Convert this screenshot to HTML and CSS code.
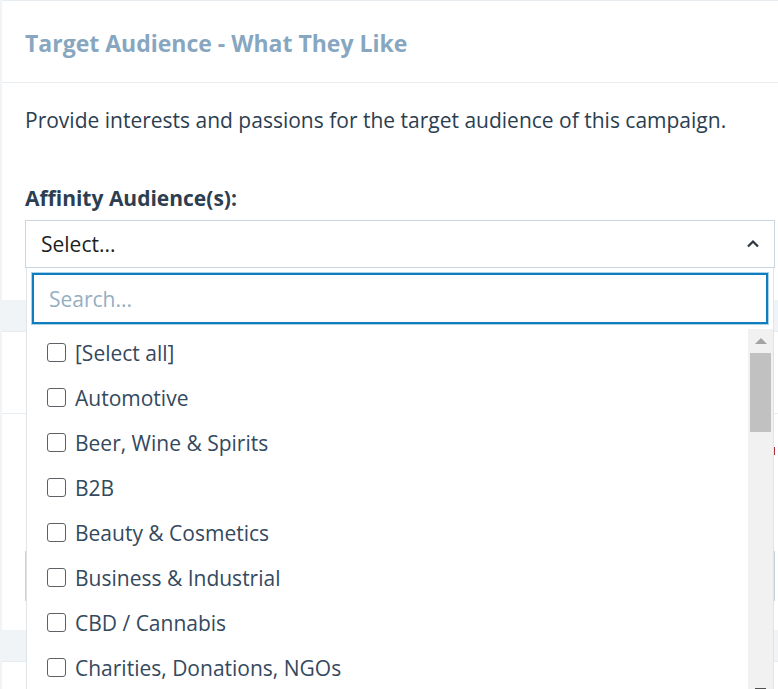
FILE: index.html
```html
<!DOCTYPE html>
<html>
<head>
<meta charset="utf-8">
<link rel="stylesheet" href="styles.css">
</head>
<body>
<div class="page">
  <section class="card card-one">
    <header class="card-header">
      <h2 class="card-title">Target Audience - What They Like</h2>
    </header>
    <div class="card-body">
      <p class="intro">Provide interests and passions for the target audience of this campaign.</p>
      <label class="field-label">Affinity Audience(s):</label>
      <div class="select-wrap">
        <div class="select-box">
          <span class="select-value">Select...</span>
          <svg class="chevron" width="14" height="10" viewBox="0 0 14 10"><path d="M2 7.5 L7 2.5 L12 7.5" fill="none" stroke="#2b3640" stroke-width="2.2"/></svg>
        </div>
        <div class="dropdown">
          <div class="search-row">
            <input class="search" type="text" placeholder="Search...">
          </div>
          <div class="list-area">
            <ul class="options">
              <li class="option"><span class="check"></span><span>[Select all]</span></li>
              <li class="option"><span class="check"></span><span>Automotive</span></li>
              <li class="option"><span class="check"></span><span>Beer, Wine &amp; Spirits</span></li>
              <li class="option"><span class="check"></span><span>B2B</span></li>
              <li class="option"><span class="check"></span><span>Beauty &amp; Cosmetics</span></li>
              <li class="option"><span class="check"></span><span>Business &amp; Industrial</span></li>
              <li class="option"><span class="check"></span><span>CBD / Cannabis</span></li>
              <li class="option"><span class="check"></span><span>Charities, Donations, NGOs</span></li>
            </ul>
            <div class="scrollbar">
              <div class="sb-up"></div>
              <div class="sb-thumb"></div>
              <div class="sb-track"></div>
              <div class="sb-down"></div>
            </div>
          </div>
        </div>
      </div>
    </div>
  </section>
  <section class="card card-two">
    <header class="card-header"></header>
    <div class="card-body two-body">
      <div class="flag"></div>
      <div class="text-input"></div>
    </div>
  </section>
  <section class="card card-three"></section>
</div>
</body>
</html>
```
FILE: styles.css
```css
* { box-sizing: border-box; }
html, body { margin: 0; padding: 0; }
body {
  background: #f1f4f7;
  font-family: "Open Sans", "Liberation Sans", sans-serif;
  color: #2c3e50;
  overflow: hidden;
  height: 689px;
}
.page {
  padding-left: 2px;
  display: flex;
  flex-direction: column;
  gap: 31px;
}
.card {
  background: #fff;
  border-top: 1px solid #e7ecf0;
}
.card-one { height: 300px; position: relative; z-index: 2; }
.card-two { height: 299px; }
.card-three { height: 60px; }
.card-header {
  height: 82px;
  border-bottom: 1px solid #e8edf1;
  padding-left: 23px;
  display: flex;
  align-items: center;
}
.card-title {
  margin: 0;
  font-size: 23px;
  font-weight: 700;
  color: #87a6bf;
  padding-top: 2px;
}
.card-body {
  padding: 22px 3px 0 23px;
}
.intro {
  margin: 0;
  font-size: 21px;
  line-height: 30px;
  color: #2c3e50;
}
.field-label {
  display: block;
  margin-top: 48px;
  font-size: 21px;
  font-weight: 700;
  line-height: 30px;
  color: #2c3e50;
}
.select-wrap {
  position: relative;
  margin-top: 7px;
}
.select-box {
  height: 48px;
  border: 1px solid #c9d5df;
  display: flex;
  align-items: center;
  justify-content: space-between;
  padding: 0 14px 0 15px;
  background: #fff;
}
.select-value {
  font-size: 21px;
  color: #1e1e1e;
}
.chevron { display: block; margin-top: -1px; }
.dropdown {
  position: absolute;
  top: 48px;
  left: 1px;
  right: 1px;
  height: 430px;
  background: #fff;
  border-left: 1px solid #dfe4e9;
  border-right: 1px solid #dfe4e9;
}
.search-row {
  padding: 5px 5px 0 5px;
}
.search {
  display: block;
  width: 100%;
  height: 51px;
  border: 2px solid #0f7cbd;
  box-shadow: 0 0 0 1px #a9d1ea;
  outline: none;
  font-family: inherit;
  font-size: 21px;
  padding: 0 15px;
  color: #333;
}
.search::placeholder { color: #96aec2; }
.list-area {
  display: flex;
  margin-top: 5px;
  height: 370px;
}
.options {
  list-style: none;
  margin: 0;
  padding: 1px 0 0 20px;
  flex: 1;
}
.option {
  height: 45px;
  display: flex;
  align-items: center;
  gap: 9px;
  font-size: 21px;
  color: #34495e;
}
.check {
  width: 19px;
  height: 19px;
  border: 1.5px solid #5d6166;
  border-radius: 3px;
  flex: none;
}
.scrollbar {
  width: 25px;
  background: #f1f1f1;
  display: flex;
  flex-direction: column;
  align-items: center;
}
.sb-up {
  margin-top: 9px;
  width: 0;
  height: 0;
  border-left: 6px solid transparent;
  border-right: 6px solid transparent;
  border-bottom: 6px solid #a3a3a3;
}
.sb-thumb {
  margin-top: 9px;
  width: 21px;
  height: 79px;
  background: #c1c1c1;
}
.sb-track { flex: 1; }
.sb-down {
  width: 11px;
  height: 2px;
  background: #505050;
  margin-bottom: 9px;
}
.two-body {
  position: relative;
  padding-top: 0;
}
.flag {
  height: 8px;
  width: 3px;
  margin: 33px 0 0 auto;
  background: #b5343a;
  border-left: 1px solid #3a6fc0;
}
.text-input {
  margin-top: 96px;
  height: 50px;
  border: 1px solid #c3d3e0;
}
```
